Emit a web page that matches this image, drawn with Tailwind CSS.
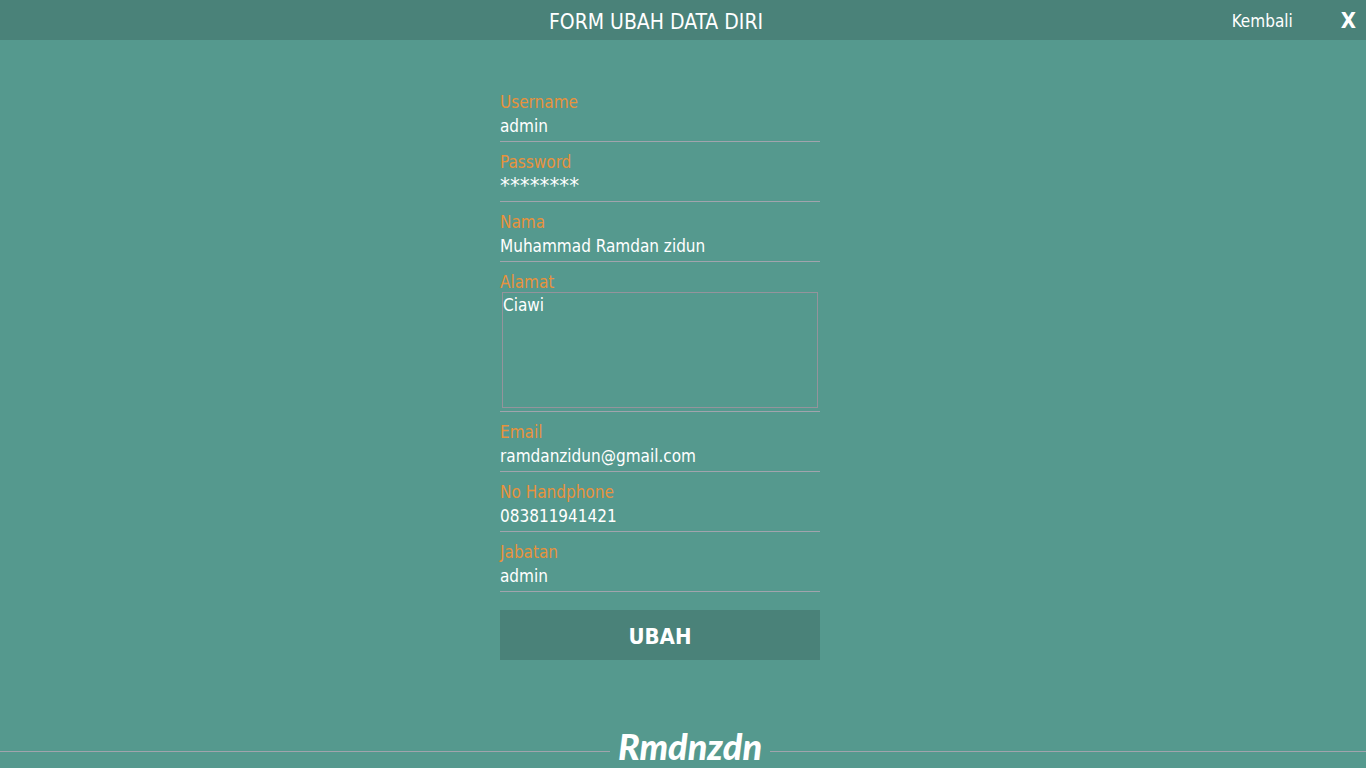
<!DOCTYPE html>
<html lang="id">
<head>
<meta charset="utf-8">
<meta name="viewport" content="width=device-width, initial-scale=1">
<title>Form Ubah Data Diri</title>
<script src="https://cdn.jsdelivr.net/npm/@tailwindcss/browser@4"></script>
</head>
<body class="flex min-h-screen flex-col bg-[#55998e] font-[Tahoma,'DejaVu_Sans_Condensed','DejaVu_Sans',sans-serif] text-[17px] text-white">
  <header class="flex h-10 shrink-0 items-center bg-[#4a8279]">
    <div class="flex-1"></div>
    <h1 class="pt-1 pr-11 text-[21px] leading-6">FORM UBAH DATA DIRI</h1>
    <nav class="flex flex-1 items-center justify-end gap-12 pt-0.5 pr-2.5">
      <a href="#" class="leading-6">Kembali</a>
      <button type="button" aria-label="Tutup" class="text-[22px] leading-6 font-bold">X</button>
    </nav>
  </header>

  <main class="flex flex-1 flex-col items-center pt-[42px] pr-[46px]">
    <form class="flex w-80 flex-col">
      <div class="flex flex-col border-b border-[#a0a4ad] pt-2 pb-[3px]">
        <label for="username" class="h-[22px] leading-6 text-[#e8923c]">Username</label>
        <input id="username" type="text" value="admin" class="h-[26px] w-full bg-transparent pt-0.5 outline-none">
      </div>
      <div class="flex flex-col border-b border-[#a0a4ad] pt-2 pb-[3px]">
        <label for="password" class="h-[22px] leading-6 text-[#e8923c]">Password</label>
        <input id="password" type="text" value="********" class="h-[26px] w-full bg-transparent text-[22px] outline-none">
      </div>
      <div class="flex flex-col border-b border-[#a0a4ad] pt-2 pb-[3px]">
        <label for="nama" class="h-[22px] leading-6 text-[#e8923c]">Nama</label>
        <input id="nama" type="text" value="Muhammad Ramdan zidun" class="h-[26px] w-full bg-transparent pt-0.5 outline-none">
      </div>
      <div class="flex flex-col border-b border-[#a0a4ad] pt-2 pb-[3px]">
        <label for="alamat" class="h-[22px] leading-6 text-[#e8923c]">Alamat</label>
        <textarea id="alamat" class="mx-0.5 h-[116px] resize-none border border-[#94949c] bg-transparent leading-6 outline-none">Ciawi</textarea>
      </div>
      <div class="flex flex-col border-b border-[#a0a4ad] pt-2 pb-[3px]">
        <label for="email" class="h-[22px] leading-6 text-[#e8923c]">Email</label>
        <input id="email" type="text" value="ramdanzidun@gmail.com" class="h-[26px] w-full bg-transparent pt-0.5 outline-none">
      </div>
      <div class="flex flex-col border-b border-[#a0a4ad] pt-2 pb-[3px]">
        <label for="hp" class="h-[22px] leading-6 text-[#e8923c]">No Handphone</label>
        <input id="hp" type="text" value="083811941421" class="h-[26px] w-full bg-transparent pt-0.5 outline-none">
      </div>
      <div class="flex flex-col border-b border-[#a0a4ad] pt-2 pb-[3px]">
        <label for="jabatan" class="h-[22px] leading-6 text-[#e8923c]">Jabatan</label>
        <input id="jabatan" type="text" value="admin" class="h-[26px] w-full bg-transparent pt-0.5 outline-none">
      </div>
      <button type="submit" class="mt-[18px] h-[50px] bg-[#4a8279] pt-0.5 text-[22px] font-bold">UBAH</button>
    </form>
  </main>

  <footer class="flex h-11 shrink-0 items-center">
    <div class="mt-2.5 h-px flex-[610] bg-[#a0a4ad]"></div>
    <div class="w-40 text-center font-[Lato,sans-serif] text-[36px] leading-11 font-black italic">Rmdnzdn</div>
    <div class="mt-2.5 h-px flex-[596] bg-[#a0a4ad]"></div>
  </footer>
</body>
</html>
